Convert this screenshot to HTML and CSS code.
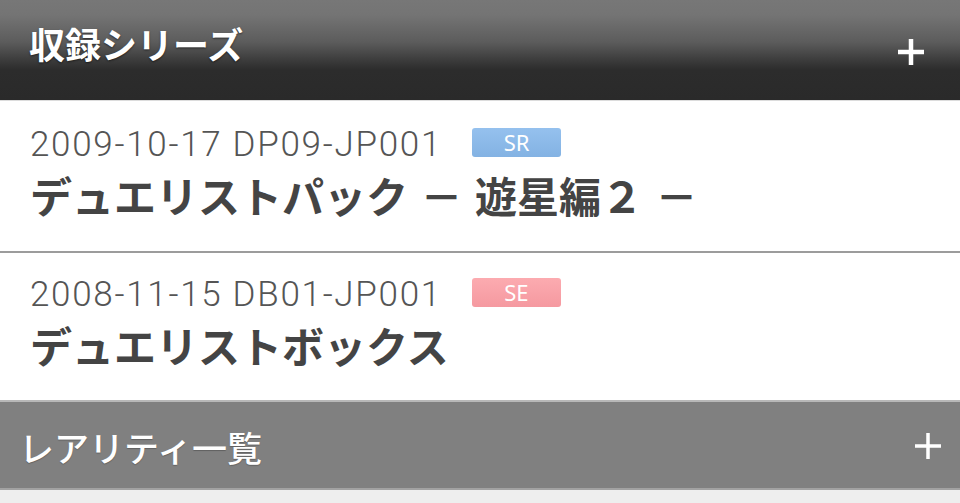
FILE: index.html
```html
<!DOCTYPE html>
<html lang="ja">
<head>
<meta charset="utf-8">
<link rel="stylesheet" href="styles.css">
</head>
<body>
<div class="page">
  <div class="head head-dark">
    <span class="head-title">収録シリーズ</span>
    <svg class="plus plus-1" viewBox="0 0 28 28" width="28" height="28"><path d="M14 1V27M1 14H27" stroke="#fff" stroke-width="4.5"/></svg>
  </div>
  <div class="item item-first">
    <div class="meta"><span>2009-10-17 DP09-JP001</span><span class="badge badge-sr">SR</span></div>
    <div class="title title-spaced">デュエリストパック － 遊星編２ －</div>
  </div>
  <div class="item item-last">
    <div class="meta"><span>2008-11-15 DB01-JP001</span><span class="badge badge-se">SE</span></div>
    <div class="title">デュエリストボックス</div>
  </div>
  <div class="head head-gray">
    <span class="head-title head-title-2">レアリティ一覧</span>
    <svg class="plus plus-2" viewBox="0 0 26 26" width="26" height="26"><path d="M13 0V26M0 13H26" stroke="#fff" stroke-width="3.5"/></svg>
  </div>
  <div class="foot"></div>
</div>
</body>
</html>
```

FILE: styles.css
```css
html, body {
  margin: 0;
  padding: 0;
  background: #eeeeee;
}
.page {
  width: 960px;
  font-family: "Noto Sans CJK JP", "Noto Sans", sans-serif;
}
.head {
  display: flex;
  justify-content: space-between;
  color: #fff;
  box-sizing: border-box;
}
.head-dark {
  height: 101px;
  align-items: flex-start;
  background: linear-gradient(#777777 0%, #747474 15%, #5c5c5c 42%, #3c3c3c 60%, #2c2c2c 70%, #2a2a2a 100%);
  border-bottom: 1px solid #dcdcdc;
}
.head-title {
  font-size: 36px;
  font-weight: 700;
  line-height: 36px;
  margin-left: 29px;
  margin-top: 25px;
  text-shadow: 0 1px 2px rgba(0, 0, 0, 0.55);
}
.plus-1 {
  margin-top: 38px;
  margin-right: 35px;
}
.item {
  background: #fff;
  box-sizing: border-box;
  padding-left: 30px;
}
.item-first {
  height: 152px;
  padding-top: 26px;
  border-bottom: 2px solid #9c9c9c;
}
.item-last {
  height: 147px;
  padding-top: 24px;
}
.meta {
  display: flex;
  align-items: center;
  color: #555;
  font-family: Roboto, "Noto Sans", sans-serif;
  font-size: 35px;
  font-weight: 300;
  line-height: 36px;
  letter-spacing: 1.7px;
}
.badge {
  display: inline-block;
  width: 89px;
  height: 29px;
  line-height: 29px;
  border-radius: 3px;
  color: #fff;
  text-align: center;
  font-family: "Noto Sans", sans-serif;
  font-size: 22px;
  font-weight: 400;
  letter-spacing: 0;
  margin-left: 30px;
  margin-top: -5px;
}
.badge-sr {
  background: linear-gradient(#95c1ee, #83b2e3);
}
.badge-se {
  background: linear-gradient(#fcabb0, #f599a0);
}
.title {
  color: #444;
  font-size: 42px;
  font-weight: 700;
  line-height: 48px;
  margin-top: 8px;
}
.title-spaced {
  word-spacing: 3px;
}
.head-gray {
  height: 90px;
  align-items: center;
  background: #808080;
  border-top: 2px solid #b8b8b8;
  border-bottom: 2px solid #a2a2a2;
}
.head-title-2 {
  font-size: 35px;
  line-height: 35px;
  margin-left: 19px;
  margin-top: 2px;
  font-weight: 500;
  text-shadow: 0 1px 1px rgba(0, 0, 0, 0.25);
}
.plus-2 {
  margin-right: 19px;
  margin-top: 2px;
}
.foot {
  height: 13px;
  background: #eeeeee;
}
```
